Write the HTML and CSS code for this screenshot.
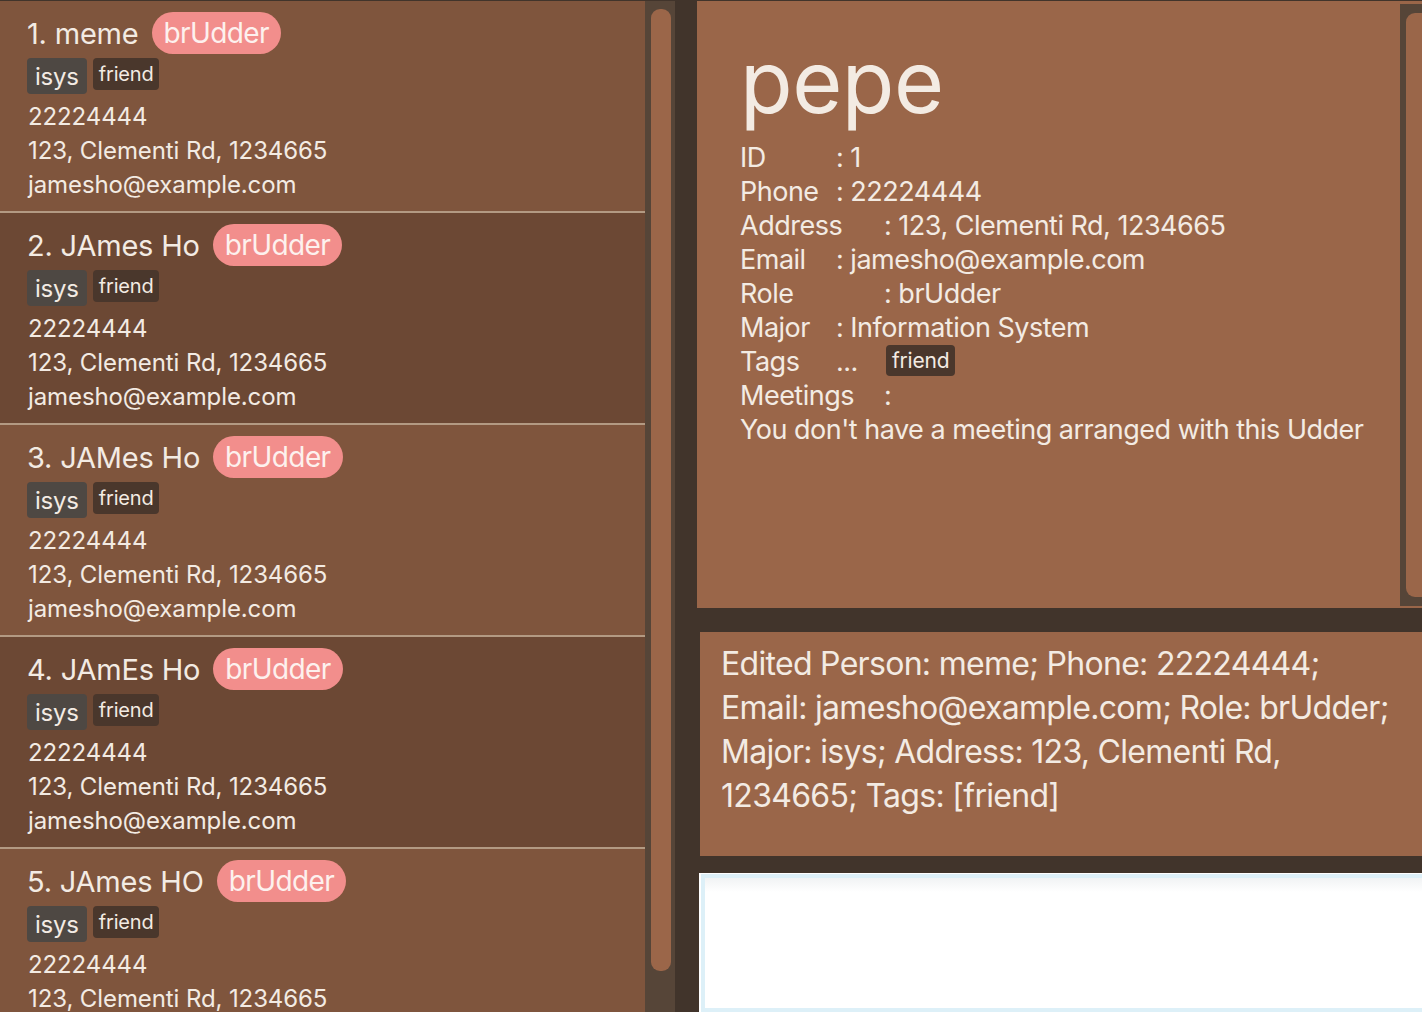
FILE: index.html
```html
<!DOCTYPE html>
<html>
<head>
<meta charset="utf-8">
<link rel="stylesheet" href="styles.css">
</head>
<body>
<div class="app">
  <div class="left">
    <div class="list">
      <div class="card odd">
        <div class="name-row"><span class="name">1. meme</span><span class="role">brUdder</span></div>
        <div class="tags"><span class="tag major">isys</span><span class="tag fr">friend</span></div>
        <div class="line">22224444</div>
        <div class="line">123, Clementi Rd, 1234665</div>
        <div class="line">jamesho@example.com</div>
      </div>
      <div class="card even">
        <div class="name-row"><span class="name">2. JAmes Ho</span><span class="role">brUdder</span></div>
        <div class="tags"><span class="tag major">isys</span><span class="tag fr">friend</span></div>
        <div class="line">22224444</div>
        <div class="line">123, Clementi Rd, 1234665</div>
        <div class="line">jamesho@example.com</div>
      </div>
      <div class="card odd">
        <div class="name-row"><span class="name">3. JAMes Ho</span><span class="role">brUdder</span></div>
        <div class="tags"><span class="tag major">isys</span><span class="tag fr">friend</span></div>
        <div class="line">22224444</div>
        <div class="line">123, Clementi Rd, 1234665</div>
        <div class="line">jamesho@example.com</div>
      </div>
      <div class="card even">
        <div class="name-row"><span class="name">4. JAmEs Ho</span><span class="role">brUdder</span></div>
        <div class="tags"><span class="tag major">isys</span><span class="tag fr">friend</span></div>
        <div class="line">22224444</div>
        <div class="line">123, Clementi Rd, 1234665</div>
        <div class="line">jamesho@example.com</div>
      </div>
      <div class="card odd">
        <div class="name-row"><span class="name">5. JAmes HO</span><span class="role">brUdder</span></div>
        <div class="tags"><span class="tag major">isys</span><span class="tag fr">friend</span></div>
        <div class="line">22224444</div>
        <div class="line">123, Clementi Rd, 1234665</div>
        <div class="line">jamesho@example.com</div>
      </div>
    </div>
    <div class="track"><div class="thumb"></div></div>
  </div>
  <div class="right">
    <div class="detail">
      <div class="detail-body">
        <div class="big">pepe</div>
        <div class="row"><span class="lbl s">ID</span><span>: 1</span></div>
        <div class="row"><span class="lbl s">Phone</span><span>: 22224444</span></div>
        <div class="row"><span class="lbl l">Address</span><span>: 123, Clementi Rd, 1234665</span></div>
        <div class="row"><span class="lbl s">Email</span><span>: jamesho@example.com</span></div>
        <div class="row"><span class="lbl l">Role</span><span>: brUdder</span></div>
        <div class="row"><span class="lbl s">Major</span><span>: Information System</span></div>
        <div class="row"><span class="lbl s">Tags</span><span class="dots">...</span><span class="tag fr dtag">friend</span></div>
        <div class="row"><span class="lbl l">Meetings</span><span>:</span></div>
        <div class="row">You don't have a meeting arranged with this Udder</div>
      </div>
      <div class="dtrack"><div class="dthumb"></div></div>
    </div>
    <div class="result">Edited Person: meme; Phone: 22224444;<br>Email: jamesho@example.com; Role: brUdder;<br>Major: isys; Address: 123, Clementi Rd,<br>1234665; Tags: [friend]</div>
    <div class="command"><div class="cmd-inner"></div></div>
  </div>
</div>
</body>
</html>
```
FILE: styles.css
```css
html, body {
  margin: 0;
  padding: 0;
}
body {
  width: 1422px;
  height: 1012px;
  overflow: hidden;
  background: #41342b;
  font-family: Inter, "Noto Sans", sans-serif;
  color: #f3ebe3;
}
.app {
  display: flex;
  padding-top: 1px;
  height: 1011px;
}
.left {
  display: flex;
  width: 675px;
  flex: none;
}
.list {
  width: 645px;
  overflow: hidden;
}
.card {
  border-bottom: 2px solid #b39a83;
  padding: 11px 0 0 27px;
  box-sizing: content-box;
  height: 199px;
}
.card.odd { background: #7f553d; }
.card.even { background: #6c4834; }
.name-row {
  display: flex;
  align-items: center;
  gap: 13px;
  height: 42px;
}
.name {
  font-size: 29px;
  letter-spacing: -0.2px;
}
.role {
  background: #f28e8c;
  color: #fdf1ee;
  font-size: 28px;
  letter-spacing: -0.6px;
  height: 42px;
  line-height: 42px;
  padding: 0 12px;
  border-radius: 21px;
}
.tags {
  display: flex;
  align-items: flex-start;
  gap: 6px;
  margin-top: 4px;
}
.tag {
  border-radius: 4px;
  letter-spacing: -0.2px;
}
.tag.major {
  background: #4e4843;
  font-size: 24px;
  height: 36px;
  line-height: 38px;
  padding: 0 8px;
}
.tag.fr {
  background: #4a372c;
  font-size: 20px;
  height: 32px;
  line-height: 32px;
  padding: 0 6px;
}
.line {
  font-size: 24px;
  line-height: 34px;
  letter-spacing: -0.1px;
  margin-left: 1px;
}
.tags + .line { margin-top: 6px; }
.track {
  width: 30px;
  background: #564538;
  padding: 8px 0 0 6px;
  box-sizing: border-box;
  height: 1011px;
}
.thumb {
  width: 20px;
  height: 962px;
  background: #9b6649;
  border-radius: 9px;
}
.right {
  flex: 1;
  margin-left: 22px;
  display: flex;
  flex-direction: column;
}
.detail {
  height: 607px;
  background: #9a6649;
  display: flex;
}
.detail-body {
  flex: 1;
  padding: 38px 0 0 43px;
}
.big {
  font-size: 86px;
  line-height: 86px;
  letter-spacing: -0.5px;
  margin-bottom: 16px;
}
.row {
  display: flex;
  align-items: center;
  font-size: 27px;
  line-height: 34px;
  height: 34px;
  letter-spacing: -0.5px;
}
.lbl.s { width: 96px; }
.lbl.l { width: 144px; }
.dots { width: 50px; }
.tag.dtag {
  font-size: 21px;
  height: 31px;
  line-height: 31px;
  padding: 0 6px;
  margin-top: -4px;
  letter-spacing: -0.2px;
}
.dtrack {
  width: 22px;
  margin: 3px 0 2px;
  background: #564538;
  padding: 9px 0 9px 6px;
  box-sizing: border-box;
}
.dthumb {
  height: 100%;
  background: #9a6649;
  border-radius: 9px 0 0 9px;
}
.result {
  margin: 24px 0 0 3px;
  height: 224px;
  box-sizing: border-box;
  background: #9a6649;
  padding: 10px 10px 0 21px;
  font-size: 32px;
  line-height: 44px;
  letter-spacing: -0.7px;
  white-space: nowrap;
}
.command {
  margin: 17px 0 0 2px;
  flex: 1;
  background: #ffffff;
  padding: 1px 0 0 2px;
}
.cmd-inner {
  height: 100%;
  box-sizing: border-box;
  border: 4px solid #ddf0f8;
  border-right: none;
  background: linear-gradient(#f1f3f4, #ffffff 14px);
}
```
